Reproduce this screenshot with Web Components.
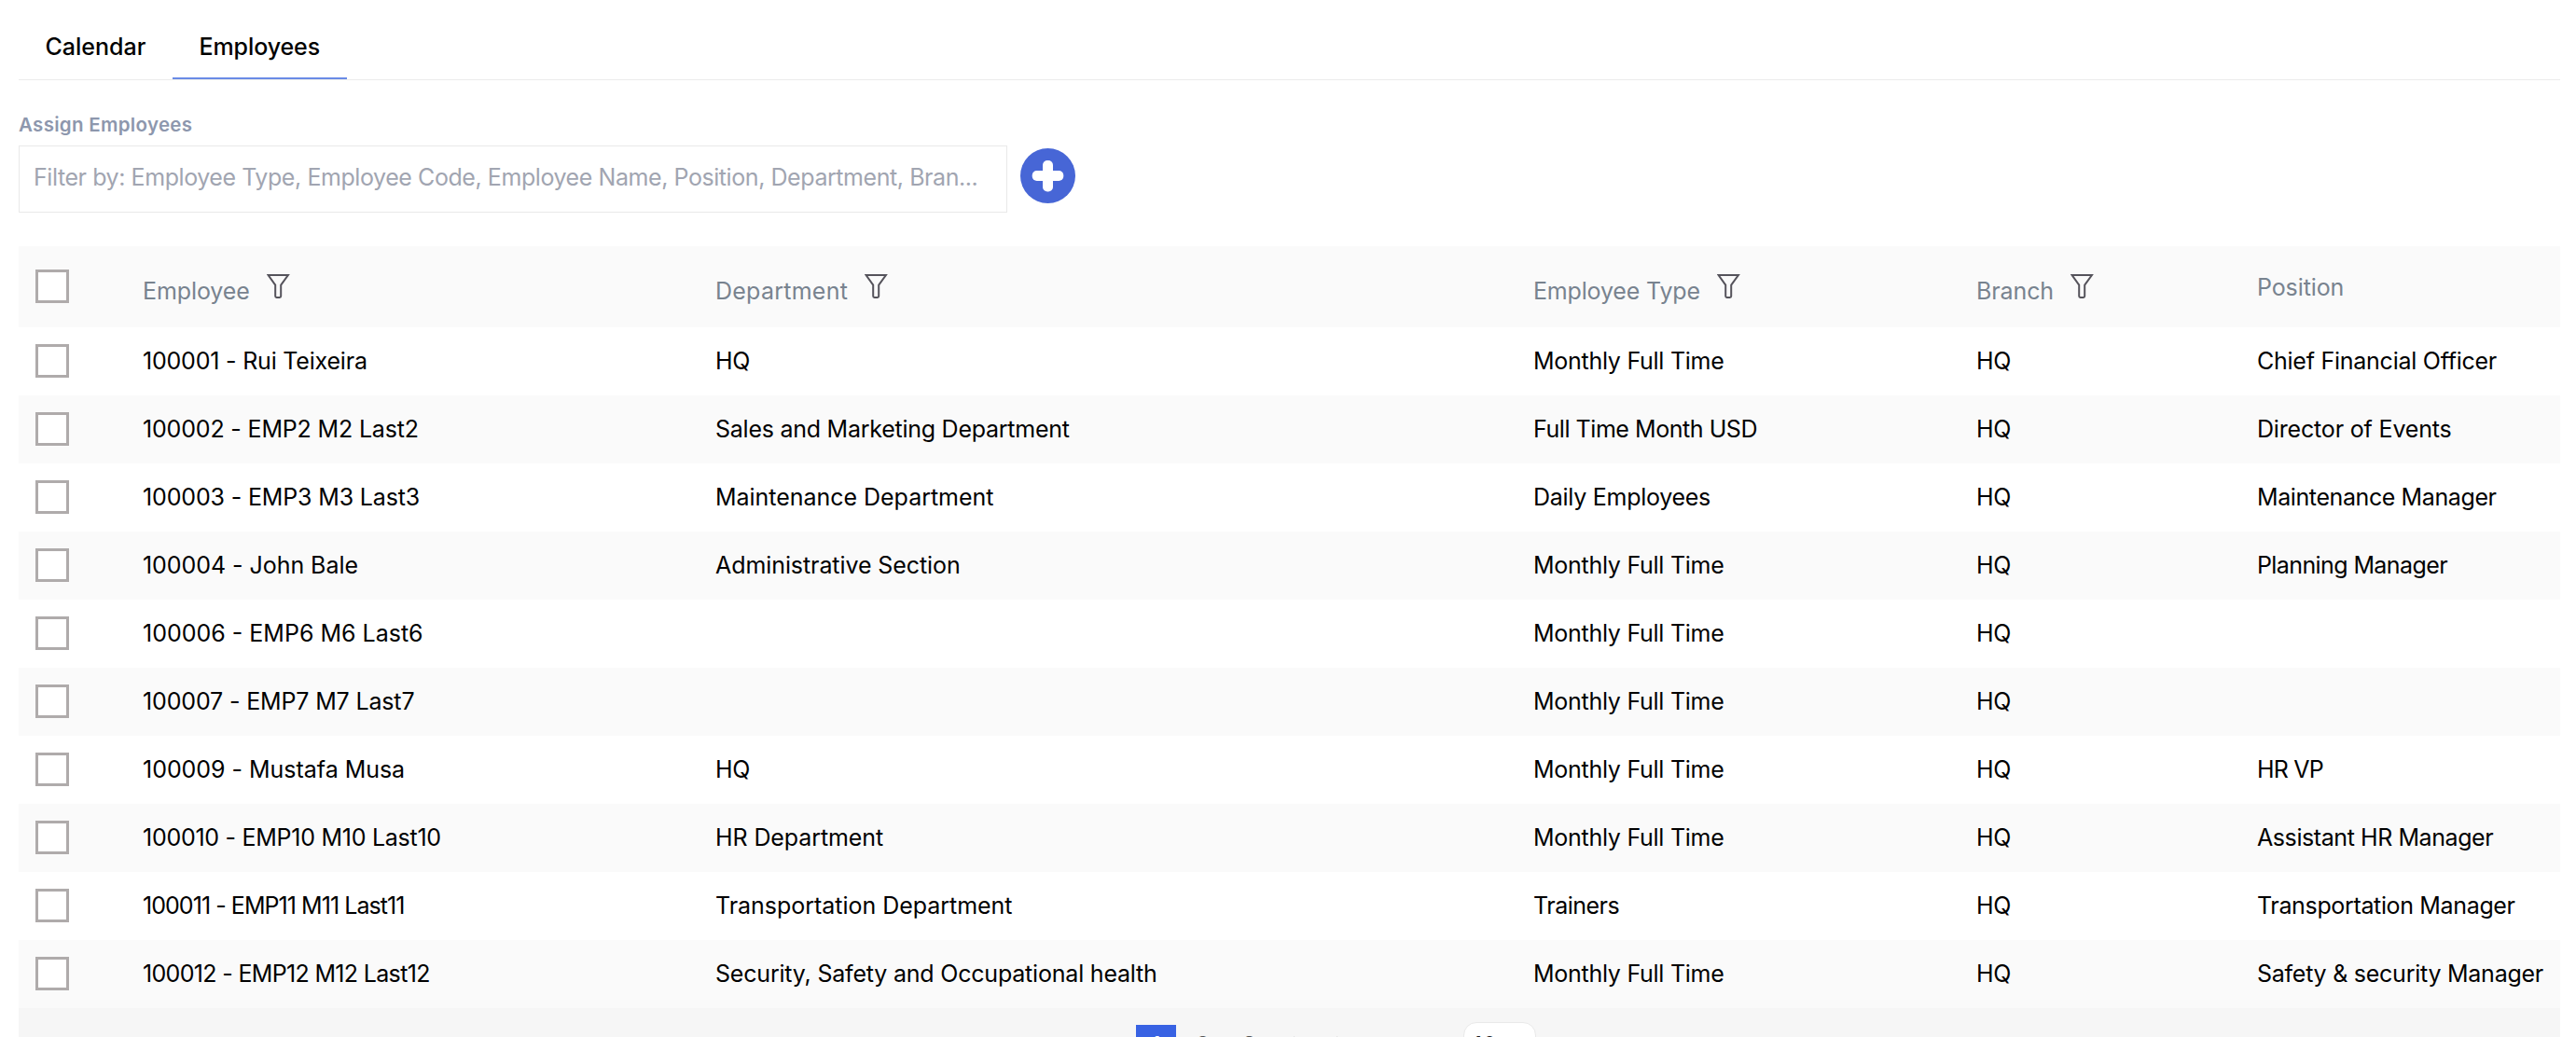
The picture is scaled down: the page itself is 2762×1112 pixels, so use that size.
<!DOCTYPE html>
<html lang="en">
<head>
<meta charset="utf-8">
<title>Employees</title>
<style>
  body {
    margin: 0;
    height: 1112px;
    overflow: hidden;
    background: #fff;
    color: #000;
    font: 400 25px/32px Inter, "Liberation Sans", sans-serif;
  }
</style>
</head>
<body>
<employees-page>
  <tab-bar slot="tabs">
    <tab-item style="--track: 0px">Calendar</tab-item>
    <tab-item active style="--track: -.1px">Employees</tab-item>
  </tab-bar>
  <employee-filter slot="filter" label="Assign Employees">Filter by: Employee Type, Employee Code, Employee Name, Position, Department, Bran...</employee-filter>
  <employee-table slot="table"></employee-table>
  <table-pager slot="pager" pages="3" size="10"></table-pager>
</employees-page>

<script>
class EmployeesPage extends HTMLElement {
  constructor() {
    super();
    this.attachShadow({ mode: 'open' });
  }

  connectedCallback() {
    this.shadowRoot.innerHTML = /*html*/ `
    <style>
      :host {
        display: flex;
        flex-direction: column;
        padding: 16px 17px 0 20px;
      }
      slot[name="table"] {
        display: block;
        margin-top: 36px;
      }
    </style>
    <slot name="tabs"></slot>
    <slot name="filter"></slot>
    <slot name="table"></slot>
    <slot name="pager"></slot>
    `;
  }
}
window.customElements.define('employees-page', EmployeesPage);

/* Tabs */
class TabBar extends HTMLElement {
  constructor() {
    super();
    this.attachShadow({ mode: 'open' });
  }

  connectedCallback() {
    this.shadowRoot.innerHTML = /*html*/ `
    <style>
      :host {
        display: flex;
        height: 69px;
        border-bottom: 1px solid #ebebeb;
      }
    </style>
    <slot></slot>
    `;
  }
}
window.customElements.define('tab-bar', TabBar);

class TabItem extends HTMLElement {
  constructor() {
    super();
    this.attachShadow({ mode: 'open' });
  }

  connectedCallback() {
    this.shadowRoot.innerHTML = /*html*/ `
    <style>
      :host {
        display: block;
        box-sizing: border-box;
        width: 165px;
        padding: 18px 0 0 28.5px;
        border-bottom: 2px solid transparent;
        font-weight: 500;
        letter-spacing: var(--track, 0);
        cursor: pointer;
      }
      :host([active]) {
        width: 187px;
        border-color: #6a8be6;
      }
    </style>
    <slot></slot>
    `;
  }
}
window.customElements.define('tab-item', TabItem);

/* Filter field with the add button */
class EmployeeFilter extends HTMLElement {
  constructor() {
    super();
    this.attachShadow({ mode: 'open' });
  }

  connectedCallback() {
    this.shadowRoot.innerHTML = /*html*/ `
    <style>
      :host {
        display: block;
        padding-top: 34px;
      }
      .label {
        height: 36px;
        line-height: 28px;
        font-size: 20.5px;
        font-weight: 600;
        letter-spacing: .3px;
        color: #8d97ad;
      }
      .row {
        display: flex;
        gap: 14px;
      }
      .field {
        box-sizing: border-box;
        width: 1060px;
        height: 72px;
        padding: 17px 0 0 15px;
        border: 1px solid #e9e9e9;
        color: #a1a5b1;
        letter-spacing: -.43px;
        white-space: nowrap;
      }
      svg {
        display: block;
        margin-top: 3px;
      }
    </style>
    <div class="label">${this.getAttribute('label')}</div>
    <div class="row">
      <div class="field"><slot></slot></div>
      <svg width="59" height="59" viewBox="0 0 59 59">
        <circle cx="29.5" cy="29.5" r="29.5" fill="#4766d6"/>
        <rect x="12.7" y="24" width="33.6" height="11" rx="5" fill="#fff"/>
        <rect x="24" y="13" width="11" height="33.4" rx="5" fill="#fff"/>
      </svg>
    </div>
    `;
  }
}
window.customElements.define('employee-filter', EmployeeFilter);

/* Checkbox */
class CheckBox extends HTMLElement {
  constructor() {
    super();
    this.attachShadow({ mode: 'open' });
  }

  connectedCallback() {
    this.shadowRoot.innerHTML = /*html*/ `
    <style>
      :host {
        display: block;
        box-sizing: border-box;
        width: 36px;
        height: 36px;
        border: 3px solid #afabab;
        background: #fff;
      }
    </style>
    `;
  }
}
window.customElements.define('check-box', CheckBox);

/* Column title, with a funnel when it can be filtered */
class ColumnTitle extends HTMLElement {
  constructor() {
    super();
    this.attachShadow({ mode: 'open' });
  }

  connectedCallback() {
    const funnel = /*html*/ `
      <svg width="25" height="26" viewBox="0 0 25 26" fill="none" stroke="#55535b" stroke-width="2">
        <path d="M1.6 1H22.9L15.2 11.6V23.6Q15.2 25 13.8 25H10.6Q9.2 25 9.2 23.6V11.6Z"/>
      </svg>`;
    this.shadowRoot.innerHTML = /*html*/ `
    <style>
      :host {
        display: flex;
        align-items: center;
        gap: 18px;
        color: #78838f;
        letter-spacing: var(--track, 0);
      }
      span {
        padding-top: 1px;
      }
      :host([filter]) span {
        padding-top: 9px;
      }
      svg {
        margin-bottom: 1px;
      }
    </style>
    <span><slot></slot></span>
    ${this.hasAttribute('filter') ? funnel : ''}
    `;
  }
}
window.customElements.define('column-title', ColumnTitle);

/* Table */
class TableRow extends HTMLElement {
  constructor() {
    super();
    this.attachShadow({ mode: 'open' });
  }

  connectedCallback() {
    this.shadowRoot.innerHTML = /*html*/ `
    <style>
      :host {
        display: grid;
        grid-template-columns: 133px 614px 877px 475px 301px 1fr;
        align-items: center;
        box-sizing: border-box;
        height: 73px;
        padding-bottom: 1px;
        white-space: nowrap;
      }
      :host([shaded]) {
        background: #fafafa;
      }
      :host([head]) {
        height: 87px;
      }
      check-box {
        margin-left: 18px;
      }
    </style>
    <check-box></check-box>
    <slot></slot>
    `;
  }
}
window.customElements.define('table-row', TableRow);

// letter spacing that goes with each text, in px
const TRACKING = {
  '100001 - Rui Teixeira': -.2,
  '100002 - EMP2 M2 Last2': -.17,
  '100003 - EMP3 M3 Last3': -.15,
  '100004 - John Bale': -.05,
  '100006 - EMP6 M6 Last6': 0,
  '100007 - EMP7 M7 Last7': -.15,
  '100009 - Mustafa Musa': -.03,
  '100010 - EMP10 M10 Last10': -.27,
  '100011 - EMP11 M11 Last11': -.95,
  '100012 - EMP12 M12 Last12': -.67,
  'Sales and Marketing Department': -.25,
  'Maintenance Department': -.03,
  'Administrative Section': -.08,
  'Transportation Department': -.03,
  'HR Department': -.1,
  'Monthly Full Time': -.27,
  'Full Time Month USD': -.45,
  'Daily Employees': -.27,
  'Trainers': -.5,
  'Chief Financial Officer': -.25,
  'Director of Events': -.17,
  'Maintenance Manager': -.4,
  'Planning Manager': -.6,
  'HR VP': -.8,
  'Assistant HR Manager': -.42,
  'Transportation Manager': -.35,
  'Safety & security Manager': -.25,
  'HQ': -.3
};

const EMPLOYEES = [
  ['100001 - Rui Teixeira', 'HQ', 'Monthly Full Time', 'HQ', 'Chief Financial Officer'],
  ['100002 - EMP2 M2 Last2', 'Sales and Marketing Department', 'Full Time Month USD', 'HQ', 'Director of Events'],
  ['100003 - EMP3 M3 Last3', 'Maintenance Department', 'Daily Employees', 'HQ', 'Maintenance Manager'],
  ['100004 - John Bale', 'Administrative Section', 'Monthly Full Time', 'HQ', 'Planning Manager'],
  ['100006 - EMP6 M6 Last6', '', 'Monthly Full Time', 'HQ', ''],
  ['100007 - EMP7 M7 Last7', '', 'Monthly Full Time', 'HQ', ''],
  ['100009 - Mustafa Musa', 'HQ', 'Monthly Full Time', 'HQ', 'HR VP'],
  ['100010 - EMP10 M10 Last10', 'HR Department', 'Monthly Full Time', 'HQ', 'Assistant HR Manager'],
  ['100011 - EMP11 M11 Last11', 'Transportation Department', 'Trainers', 'HQ', 'Transportation Manager'],
  ['100012 - EMP12 M12 Last12', 'Security, Safety and Occupational health', 'Monthly Full Time', 'HQ', 'Safety & security Manager']
];

class EmployeeTable extends HTMLElement {
  constructor() {
    super();
    this.attachShadow({ mode: 'open' });
  }

  cell(text) {
    const spacing = TRACKING[text] ?? -.2;
    return `<span style="letter-spacing: ${spacing}px">${text.replace('&', '&amp;')}</span>`;
  }

  connectedCallback() {
    this.shadowRoot.innerHTML = /*html*/ `
    <style>
      :host {
        display: block;
      }
    </style>
    <table-row head shaded>
      <column-title filter style="--track: -.1px">Employee</column-title>
      <column-title filter style="--track: .25px">Department</column-title>
      <column-title filter style="--track: -.17px">Employee Type</column-title>
      <column-title filter style="--track: -.1px">Branch</column-title>
      <column-title style="--track: -.1px">Position</column-title>
    </table-row>
    ${EMPLOYEES.map((row, i) => `
    <table-row ${i % 2 ? 'shaded' : ''}>${row.map(this.cell).join('')}</table-row>`).join('')}
    `;
  }
}
window.customElements.define('employee-table', EmployeeTable);

/* Pager */
class TablePager extends HTMLElement {
  constructor() {
    super();
    this.attachShadow({ mode: 'open' });
  }

  connectedCallback() {
    const count = Number(this.getAttribute('pages'));
    const pages = Array.from({ length: count }, (_, i) => `<div class="page">${i + 1}</div>`);
    this.shadowRoot.innerHTML = /*html*/ `
    <style>
      :host {
        display: flex;
        align-items: flex-start;
        gap: 7px;
        box-sizing: border-box;
        height: 31px;
        padding: 15px 0 0 1198px;
        overflow: hidden;
        background: #f6f6f6;
        color: #555;
      }
      .page {
        display: grid;
        place-content: center;
        width: 43px;
        height: 44px;
        margin-top: 3px;
        line-height: 44px;
      }
      .page:first-of-type {
        background: #3862e3;
        color: #fff;
      }
      .size {
        box-sizing: border-box;
        width: 78px;
        height: 52px;
        margin-left: 101px;
        padding-left: 9px;
        border: 1px solid #e9e9e9;
        border-radius: 14px;
        background: #fff;
        color: #222;
        line-height: 48px;
      }
    </style>
    ${pages.join('')}
    <div class="page">
      <svg width="20" height="20" fill="none" stroke="#ccc" stroke-width="2"><path d="M7 1L15 10L7 19"/></svg>
    </div>
    <div class="page">
      <svg width="20" height="20" fill="none" stroke="#ccc" stroke-width="2"><path d="M3 1L11 10L3 19M16 1V19"/></svg>
    </div>
    <div class="size">${this.getAttribute('size')}</div>
    `;
  }
}
window.customElements.define('table-pager', TablePager);
</script>
</body>
</html>
